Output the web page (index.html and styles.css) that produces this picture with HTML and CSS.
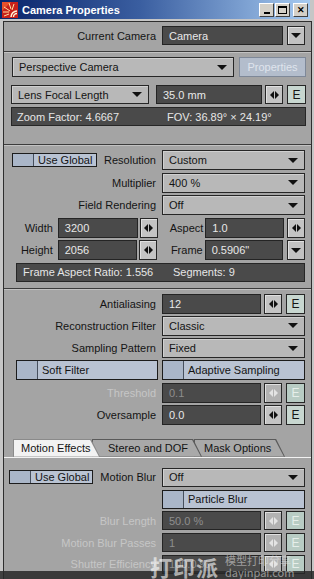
FILE: index.html
```html
<!DOCTYPE html>
<html lang="en">

<head>
    <meta charset="UTF-8">
    <meta name="viewport" content="width=device-width, initial-scale=1.0">
    <title>Camera Properties</title>
    <link rel="stylesheet" href="styles.css">
</head>

<body>
    <div class="window">
        <div class="titlebar">
            <svg class="app-icon" width="16" height="16" viewBox="0 0 16 16">
                <rect width="16" height="16" fill="#c8201a"/>
                <path d="M0 0H9L0 9Z" fill="#e8502a"/>
                <path d="M9 15A6 6 0 0 1 15 9" fill="none" stroke="#fff3d8" stroke-width="1.6"/>
                <path d="M11.5 15A3.5 3.5 0 0 1 15 11.5" fill="none" stroke="#fff3d8" stroke-width="1.4"/>
                <path d="M8 9L2 5M9 7L7 1M10 8L12 2M7 10L1 10M7 12L2 14" stroke="#ffe0a0" stroke-width="1"/>
            </svg>
            <span class="title">Camera Properties</span>
            <div class="caption-btns">
                <span class="cbtn"><i class="min"></i></span>
                <span class="cbtn"><i class="max"></i></span>
                <span class="cbtn close">&#x2715;</span>
            </div>
        </div>

        <div class="client">
            <!-- current camera -->
            <div class="group g1">
                <div class="form">
                    <span class="lbl">Current Camera</span>
                    <div class="ctl">
                        <div class="field w-cam">Camera</div>
                        <span class="arrow-btn"></span>
                    </div>
                </div>
            </div>

            <!-- camera type / lens -->
            <div class="group g2">
                <div class="line">
                    <div class="dd w-persp">Perspective Camera</div>
                    <span class="btn-off w-props">Properties</span>
                </div>
                <div class="line lens">
                    <div class="dd w-lens">Lens Focal Length</div>
                    <div class="field w-mm">35.0 mm</div>
                    <span class="spin"><svg width="9" height="8" viewBox="0 0 9 8"><path d="M4 0L0 4L4 8ZM5 0L9 4L5 8Z"/></svg></span>
                    <span class="ebtn">E</span>
                </div>
                <div class="info">
                    <span class="info-a">Zoom Factor: 4.6667</span>
                    <span>FOV: 36.89° × 24.19°</span>
                </div>
            </div>

            <!-- resolution -->
            <div class="group g3">
                <div class="form">
                    <div class="lbl split">
                        <span class="toggle w-glob"><i></i>Use Global</span>
                        <span>Resolution</span>
                    </div>
                    <div class="dd">Custom</div>

                    <span class="lbl">Multiplier</span>
                    <div class="dd">400 %</div>

                    <span class="lbl">Field Rendering</span>
                    <div class="dd">Off</div>

                    <div class="pair">
                        <span class="lbl w-lbl-a">Width</span>
                        <div class="field w-num">3200</div>
                        <span class="spin sm"><svg width="9" height="8" viewBox="0 0 9 8"><path d="M4 0L0 4L4 8ZM5 0L9 4L5 8Z"/></svg></span>
                        <span class="lbl w-lbl-b">Aspect</span>
                        <div class="field w-num2">1.0</div>
                        <span class="spin"><svg width="9" height="8" viewBox="0 0 9 8"><path d="M4 0L0 4L4 8ZM5 0L9 4L5 8Z"/></svg></span>
                    </div>

                    <div class="pair">
                        <span class="lbl w-lbl-a">Height</span>
                        <div class="field w-num">2056</div>
                        <span class="spin sm"><svg width="9" height="8" viewBox="0 0 9 8"><path d="M4 0L0 4L4 8ZM5 0L9 4L5 8Z"/></svg></span>
                        <span class="lbl w-lbl-b">Frame</span>
                        <div class="field w-num2">0.5906"</div>
                        <span class="arrow-btn"></span>
                    </div>

                    <div class="info wide indent">
                        <span class="info-b">Frame Aspect Ratio: 1.556</span>
                        <span>Segments: 9</span>
                    </div>
                </div>
            </div>

            <!-- antialiasing -->
            <div class="group g4">
                <div class="form">
                    <span class="lbl">Antialiasing</span>
                    <div class="ctl">
                        <div class="field w-val">12</div>
                        <span class="spin"><svg width="9" height="8" viewBox="0 0 9 8"><path d="M4 0L0 4L4 8ZM5 0L9 4L5 8Z"/></svg></span>
                        <span class="ebtn">E</span>
                    </div>

                    <span class="lbl">Reconstruction Filter</span>
                    <div class="dd">Classic</div>

                    <span class="lbl">Sampling Pattern</span>
                    <div class="dd">Fixed</div>

                    <span class="toggle soft"><i></i>Soft Filter</span>
                    <span class="toggle"><i></i>Adaptive Sampling</span>

                    <span class="lbl off">Threshold</span>
                    <div class="ctl">
                        <div class="field w-val off">0.1</div>
                        <span class="spin off"><svg width="9" height="8" viewBox="0 0 9 8"><path d="M4 0L0 4L4 8ZM5 0L9 4L5 8Z"/></svg></span>
                        <span class="ebtn off">E</span>
                    </div>

                    <span class="lbl">Oversample</span>
                    <div class="ctl">
                        <div class="field w-val">0.0</div>
                        <span class="spin"><svg width="9" height="8" viewBox="0 0 9 8"><path d="M4 0L0 4L4 8ZM5 0L9 4L5 8Z"/></svg></span>
                        <span class="ebtn">E</span>
                    </div>
                </div>
            </div>

            <!-- tabs -->
            <div class="tabs">
                <span class="tab active t1">Motion Effects</span>
                <span class="tab t2">Stereo and DOF</span>
                <span class="tab t3">Mask Options</span>
            </div>

            <div class="group g5">
                <div class="form">
                    <div class="lbl split">
                        <span class="toggle w-glob2"><i></i>Use Global</span>
                        <span>Motion Blur</span>
                    </div>
                    <div class="dd">Off</div>

                    <span></span>
                    <span class="toggle"><i></i>Particle Blur</span>

                    <span class="lbl off">Blur Length</span>
                    <div class="ctl">
                        <div class="field w-val off">50.0 %</div>
                        <span class="spin off"><svg width="9" height="8" viewBox="0 0 9 8"><path d="M4 0L0 4L4 8ZM5 0L9 4L5 8Z"/></svg></span>
                        <span class="ebtn off">E</span>
                    </div>

                    <span class="lbl off">Motion Blur Passes</span>
                    <div class="ctl">
                        <div class="field w-val off">1</div>
                        <span class="spin off"><svg width="9" height="8" viewBox="0 0 9 8"><path d="M4 0L0 4L4 8ZM5 0L9 4L5 8Z"/></svg></span>
                        <span class="ebtn off">E</span>
                    </div>

                    <span class="lbl off">Shutter Efficiency</span>
                    <div class="ctl">
                        <div class="field w-val off">100.0 %</div>
                        <span class="spin off"><svg width="9" height="8" viewBox="0 0 9 8"><path d="M4 0L0 4L4 8ZM5 0L9 4L5 8Z"/></svg></span>
                        <span class="ebtn off">E</span>
                    </div>
                </div>
            </div>
        </div>

        <!-- 水印 -->
        <div class="band"></div>
        <div class="watermark">
            <span class="wm-big">打印派</span>
            <span class="wm-small">
                <span>模型打印分享</span>
                <span>dayinpai.com</span>
            </span>
        </div>
    </div>
</body>

</html>
```

FILE: styles.css
```css
* {
    box-sizing: border-box;
}

body {
    margin: 0;
    background-color: #e6e6e6;
    font-family: "Liberation Sans", Arial, sans-serif;
    font-size: 11px;
    color: #141414;
}

.window {
    position: relative;
    width: 314px;
    height: 579px;
    overflow: hidden;
    background-color: #c6c6c6;
}

/* title bar */
.titlebar {
    display: flex;
    align-items: center;
    width: 310px;
    height: 19px;
    padding-left: 2px;
    background: linear-gradient(to right, #0a246a, #3a5ea0 45%, #a6caf0);
}

.app-icon {
    flex: none;
}

.title {
    margin-left: 4px;
    color: #fff;
    font-weight: bold;
    font-size: 11px;
}

.caption-btns {
    display: flex;
    margin-left: auto;
    margin-right: 2px;
}

.cbtn {
    display: flex;
    align-items: center;
    justify-content: center;
    width: 15px;
    height: 14px;
    margin-left: 1px;
    background-color: #d4d0c8;
    border: 1px solid;
    border-color: #fff #404040 #404040 #fff;
    color: #000;
    font-size: 9px;
    font-weight: bold;
}

.cbtn.close {
    margin-left: 3px;
}

.cbtn .min {
    width: 6px;
    height: 2px;
    margin-top: 6px;
    background: #000;
}

.cbtn .max {
    width: 9px;
    height: 8px;
    border: 1px solid #000;
    border-top-width: 2px;
}

/* client area */
.client {
    width: 309px;
    height: 560px;
    margin: 2px 0 0 3px;
    background-color: #a4a4a4;
    border: 1px solid #2e2e2e;
    border-bottom: none;
}

.group {
    padding: 4px 5px 0 7px;
    border-bottom: 1px solid #3c3c3c;
    box-shadow: 0 1px 0 #c2c2c2;
    margin-bottom: 1px;
}

.g1 {
    padding-bottom: 6px;
}

.g2 {
    padding-bottom: 18px;
}

.g3 {
    padding-bottom: 5px;
}

.g4 {
    border-bottom: none;
    box-shadow: none;
    padding-bottom: 13px;
}

.g5 {
    border-bottom: none;
    box-shadow: none;
    padding-top: 10px;
}

.form {
    display: grid;
    grid-template-columns: 145px 143px;
    column-gap: 6px;
    row-gap: 2.5px;
    grid-auto-rows: 20px;
}

.g4 .form {
    row-gap: 2.25px;
}

.g5 .form {
    row-gap: 2.75px;
    grid-auto-rows: 19px;
}

.g1 .form {
    grid-auto-rows: 19px;
}

.lbl {
    display: flex;
    align-items: center;
    justify-content: flex-end;
    white-space: nowrap;
}

.lbl.split {
    justify-content: space-between;
}

.lbl.off {
    color: #c6c6c6;
}

.ctl {
    display: flex;
    align-items: stretch;
}

.line {
    display: flex;
    height: 20px;
}

.line.lens {
    height: 19px;
    margin-top: 8px;
}

/* controls */
.field {
    display: flex;
    align-items: center;
    padding-left: 6px;
    background-color: #4a4a4a;
    border: 1px solid #242424;
    color: #e8e8e8;
    white-space: nowrap;
}

.field.off {
    color: #8e8e8e;
}

.dd {
    display: flex;
    align-items: center;
    padding: 0 6px 0 6px;
    background-color: #b8b8b8;
    border: 1px solid #262626;
    box-shadow: inset 1px 1px 0 #d0d0d0;
    white-space: nowrap;
}

.dd::after {
    content: "";
    margin-left: auto;
    border-left: 5px solid transparent;
    border-right: 5px solid transparent;
    border-top: 5px solid #111;
}

.arrow-btn {
    display: flex;
    align-items: center;
    justify-content: center;
    width: 18px;
    margin-left: 4px;
    background-color: #c2c2c2;
    border: 1px solid #262626;
    box-shadow: inset 1px 1px 0 #e2e2e2;
}

.arrow-btn::after {
    content: "";
    border-left: 5px solid transparent;
    border-right: 5px solid transparent;
    border-top: 5px solid #111;
}

.spin {
    display: flex;
    align-items: center;
    justify-content: center;
    width: 18px;
    margin-left: 3px;
    background-color: #c4c4c4;
    border: 1px solid #262626;
    box-shadow: inset 1px 1px 0 #e0e0e0;
    fill: #111;
}

.spin.off {
    background-color: #b2b2b2;
    fill: #e4e4e4;
}

.ebtn {
    display: flex;
    align-items: center;
    justify-content: center;
    width: 19px;
    margin-left: 4px;
    background-color: #c8d7d0;
    border: 1px solid #262626;
    color: #161616;
    font-size: 12px;
}

.ebtn.off {
    background-color: #b8ccc4;
    color: #e6eeea;
}

.btn-off {
    display: flex;
    align-items: center;
    justify-content: center;
    margin-left: 5px;
    background-color: #b3bdcc;
    border: 1px solid #7e8898;
    color: #dfe4ec;
}

.toggle {
    display: flex;
    align-items: center;
    background-color: #b9c3d3;
    border: 1px solid #1c1c1c;
    white-space: nowrap;
}

.toggle i {
    align-self: stretch;
    width: 21px;
    margin-right: 4px;
    background-color: #aab6c8;
    border-right: 1px solid #47505e;
}

.toggle.soft {
    margin-left: 5px;
    margin-right: -2px;
}

.w-glob {
    width: 85px;
    margin-left: 1px;
}

.w-glob2 {
    width: 84px;
    margin-left: -2px;
}

.w-cam {
    width: 121px;
}

.w-persp {
    width: 222px;
    margin-left: 1px;
}

.w-props {
    width: 67px;
}

.w-lens {
    width: 138px;
}

.w-mm {
    width: 106px;
    margin-left: 7px;
}

.w-val {
    width: 99px;
}

/* info bars */
.info {
    display: flex;
    align-items: center;
    height: 19px;
    margin-top: 3px;
    padding-left: 5px;
    background-color: #4a4a4a;
    border: 1px solid #262626;
    color: #e6e6e6;
    white-space: nowrap;
}

.info-a {
    width: 150px;
}

.info-b {
    width: 150px;
}

.info.wide {
    grid-column: 1 / 3;
    height: 19px;
    margin-top: 0;
}

.info.indent {
    margin-left: 5px;
    padding-left: 6px;
}

/* width / height rows */
.pair {
    grid-column: 1 / 3;
    display: flex;
}

.w-lbl-a {
    width: 42px;
    margin-right: 5px;
}

.w-num {
    width: 80px;
}

.spin.sm {
    width: 18px;
    margin-left: 2px;
}

.w-lbl-b {
    width: 46px;
    margin-right: 2px;
}

.w-num2 {
    width: 79px;
}

/* tabs */
.tabs {
    display: flex;
    height: 19px;
    padding-left: 9px;
    border-bottom: 1px solid #f2f2f2;
}

.tab {
    position: relative;
    display: flex;
    align-items: center;
    height: 18px;
    padding: 0 16px 0 8px;
    white-space: nowrap;
    background-color: #5a5a5a;
    clip-path: polygon(0 0, calc(100% - 9px) 0, 100% 100%, 0 100%);
    isolation: isolate;
}

.tab::before {
    content: "";
    position: absolute;
    inset: 1px 1px 0 1px;
    background-color: #a9a9a9;
    clip-path: polygon(0 0, calc(100% - 9px) 0, 100% 100%, 0 100%);
    z-index: -1;
}

.tab.active::before {
    background-color: #f2f2f2;
}

.tab.active {
    background-color: #8a8a8a;
}

.t1 {
    z-index: 3;
    width: 87px;
}

.t2 {
    z-index: 2;
    width: 110px;
    margin-left: -8px;
    padding-left: 16px;
}

.t3 {
    z-index: 1;
    width: 91px;
    margin-left: -8px;
    padding-left: 10px;
}

/* 水印 */
.band {
    position: absolute;
    left: 0;
    right: 0;
    bottom: 0;
    height: 8px;
    background-color: rgba(40, 40, 40, 0.85);
}

.watermark {
    position: absolute;
    left: 150px;
    bottom: 1px;
    display: flex;
    align-items: flex-end;
    font-family: "Noto Sans CJK SC", sans-serif;
    color: rgba(255, 255, 255, 0.6);
}

.wm-big {
    font-size: 22px;
    font-weight: bold;
    line-height: 24px;
    letter-spacing: 1px;
}

.wm-small {
    display: flex;
    flex-direction: column;
    margin-left: 6px;
    font-size: 11px;
    line-height: 12px;
    color: rgba(230, 230, 230, 0.55);
}
```
